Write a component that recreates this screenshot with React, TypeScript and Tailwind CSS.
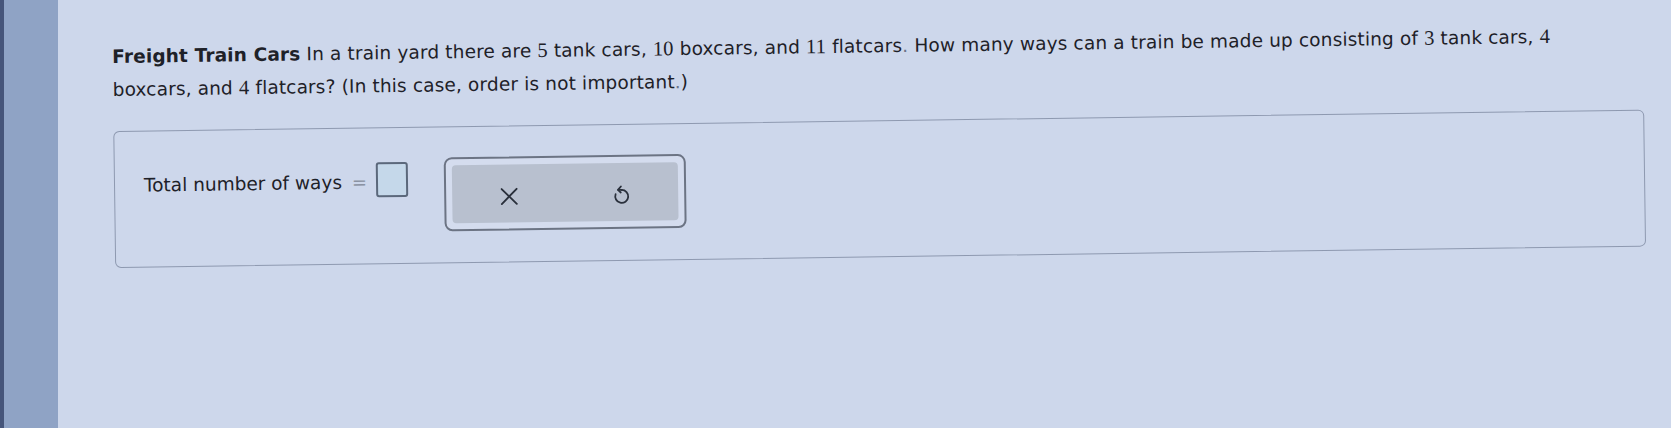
import React from "react";

const SANS = "font-['DejaVu_Sans','Verdana',sans-serif]";
const NUM = "font-['Liberation_Serif','Times_New_Roman',serif] text-[20.5px]";

function N({ children }: { children: React.ReactNode }) {
  return <span className={NUM}>{children}</span>;
}

function UndoIcon() {
  return (
    <svg width="19" height="22" viewBox="0 0 19 22" fill="none" stroke="#2a303c" strokeWidth="1.8" strokeLinecap="round" strokeLinejoin="round">
      <path d="M9.5 7 A6.5 6.5 0 1 1 3.4 11.2" />
      <path d="M9.5 7 H6.2" />
      <path d="M8.8 3.6 L5.8 7 L8.6 9.6" />
    </svg>
  );
}

function CloseIcon() {
  return (
    <svg width="18" height="18" viewBox="0 0 18 18" fill="none" stroke="#2a303c" strokeWidth="1.9" strokeLinecap="round">
      <path d="M1.5 1.5 L16.5 16.5 M16.5 1.5 L1.5 16.5" />
    </svg>
  );
}

export default function App() {
  return (
    <div className={`flex h-[428px] w-full overflow-hidden bg-[#cdd7eb] text-[#1e2128] ${SANS}`}>
      <aside className="w-[58px] shrink-0 border-l-[4px] border-[#46557a] bg-[#8fa3c5]" />

      <main className="flex-1 pl-[54px] pt-[40px]">
        <div className="origin-top-left -rotate-[0.8deg]">
          <p className="w-[1460px] text-[18.5px] leading-[32px] tracking-[0.15px]">
            <b>Freight Train Cars</b> In a train yard there are <N>5</N> tank cars, <N>10</N> boxcars, and{" "}
            <N>11</N> flatcars<span className="text-[#6b7488]">.</span> How many ways can a train be made up
            consisting of <N>3</N> tank cars, <N>4</N> boxcars, and <N>4</N> flatcars? (In this case, order is not
            important<span className="text-[#6b7488]">.</span>)
          </p>

          <section className="mt-[25px] h-[137px] w-[1531px] rounded-[6px] border border-[#8e99b0] pl-[29px] pt-[30px]">
            <div className="flex items-start">
              <span className="mt-[12px] text-[18.5px] leading-[24px]">Total number of ways</span>
              <span className="ml-[10px] mt-[12px] text-[18px] leading-[24px] text-[#8a92a2]">=</span>
              <span className="ml-[9px] mt-[4px] h-[35px] w-[32px] rounded-[3px] border-2 border-[#5b687b] bg-[#c5d8ea]" />

              <div className="ml-[36px] rounded-[8px] border-2 border-[#6c7484] bg-[#d4dcee] p-[6px]">
                <div className="flex h-[58px] w-[226px] rounded-[4px] bg-[#b8c0cf]">
                  <span className="flex flex-1 items-center justify-center pt-[5px]"><CloseIcon /></span>
                  <span className="flex flex-1 items-center justify-center pt-[3px]"><UndoIcon /></span>
                </div>
              </div>
            </div>
          </section>
        </div>
      </main>
    </div>
  );
}
